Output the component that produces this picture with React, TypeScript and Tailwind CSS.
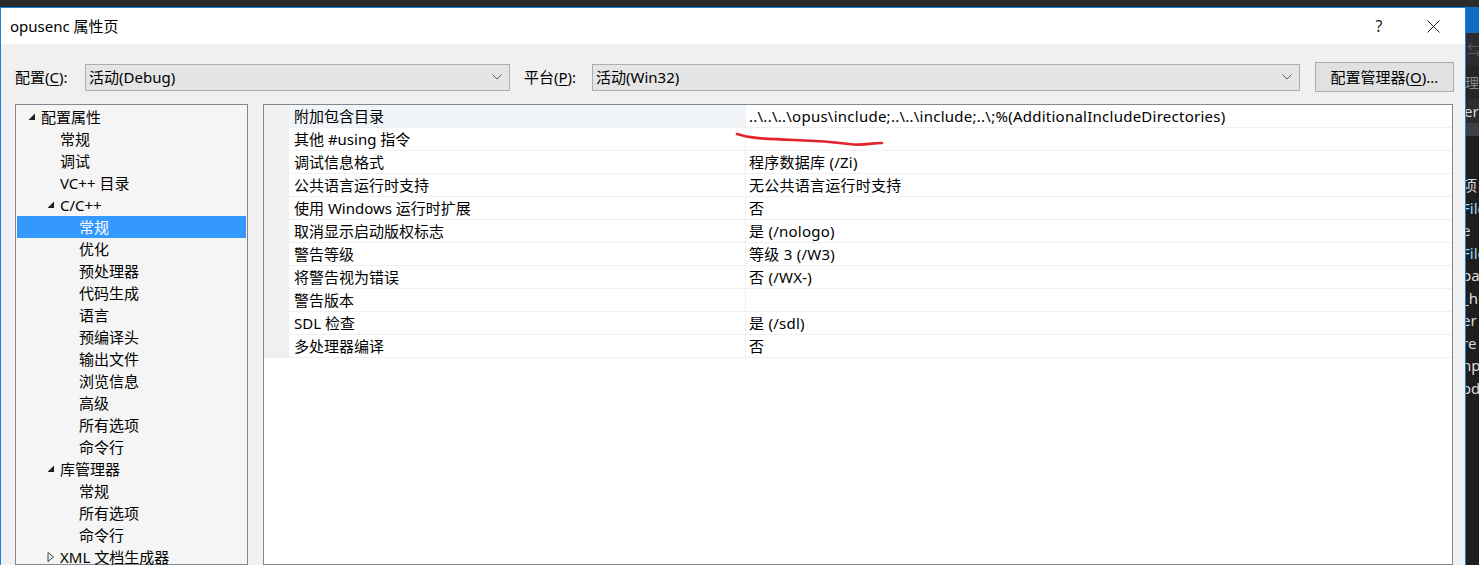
import React from "react"

const FONT = { fontFamily: '"Noto Sans", "Noto Sans CJK SC", sans-serif' }

type TreeItem = { t: string; lvl: number; exp?: "open" | "closed"; sel?: boolean }

const tree: TreeItem[] = [
  { t: "配置属性", lvl: 0, exp: "open" },
  { t: "常规", lvl: 1 },
  { t: "调试", lvl: 1 },
  { t: "VC++ 目录", lvl: 1 },
  { t: "C/C++", lvl: 1, exp: "open" },
  { t: "常规", lvl: 2, sel: true },
  { t: "优化", lvl: 2 },
  { t: "预处理器", lvl: 2 },
  { t: "代码生成", lvl: 2 },
  { t: "语言", lvl: 2 },
  { t: "预编译头", lvl: 2 },
  { t: "输出文件", lvl: 2 },
  { t: "浏览信息", lvl: 2 },
  { t: "高级", lvl: 2 },
  { t: "所有选项", lvl: 2 },
  { t: "命令行", lvl: 2 },
  { t: "库管理器", lvl: 1, exp: "open" },
  { t: "常规", lvl: 2 },
  { t: "所有选项", lvl: 2 },
  { t: "命令行", lvl: 2 },
  { t: "XML 文档生成器", lvl: 1, exp: "closed" },
]

const props: [string, string][] = [
  ["附加包含目录", "..\\..\\..\\opus\\include;..\\..\\include;..\\;%(AdditionalIncludeDirectories)"],
  ["其他 #using 指令", ""],
  ["调试信息格式", "程序数据库 (/Zi)"],
  ["公共语言运行时支持", "无公共语言运行时支持"],
  ["使用 Windows 运行时扩展", "否"],
  ["取消显示启动版权标志", "是 (/nologo)"],
  ["警告等级", "等级 3 (/W3)"],
  ["将警告视为错误", "否 (/WX-)"],
  ["警告版本", ""],
  ["SDL 检查", "是 (/sdl)"],
  ["多处理器编译", "否"],
]

function Chevron() {
  return (
    <svg width="10" height="6" viewBox="0 0 10 6" className="shrink-0">
      <polyline points="0.5,0.5 5,5 9.5,0.5" fill="none" stroke="#606060" strokeWidth="1" />
    </svg>
  )
}

function Expander({ open }: { open: boolean }) {
  return open ? (
    <svg width="8" height="8" viewBox="0 0 8 8">
      <polygon points="7,0.5 7,7 0.5,7" fill="#1e1e1e" />
    </svg>
  ) : (
    <svg width="8" height="10" viewBox="0 0 8 10">
      <polygon points="1,0.5 6.5,5 1,9.5" fill="none" stroke="#404040" strokeWidth="1" />
    </svg>
  )
}

function Combo({ width, value }: { width: string; value: string }) {
  return (
    <div
      className={`${width} h-[27px] flex items-center justify-between pl-[3px] pr-[7px] bg-[#e5e5e5] border border-[#adadad] text-[15px] leading-[25px]`}
    >
      <span>{value}</span>
      <Chevron />
    </div>
  )
}

// VS 本体のエディタが右端にわずかに覗いている部分
function BehindStrip() {
  const lines: { t: string; c: string }[] = [
    { t: "项目", c: "#dcdcdc" },
    { t: "Files", c: "#9cdcfe" },
    { t: "e", c: "#dcdcdc" },
    { t: "Files", c: "#9cdcfe" },
    { t: "pa", c: "#dcdcdc" },
    { t: "_h", c: "#dcdcdc" },
    { t: "er", c: "#dcdcdc" },
    { t: "re", c: "#dcdcdc" },
    { t: "np", c: "#dcdcdc" },
    { t: "od", c: "#dcdcdc" },
  ]
  return (
    <div className="flex-1 flex flex-col overflow-hidden bg-[#1e1e1e] text-[15px]" style={FONT}>
      <div className="h-[26px] bg-[#0e6fc1]" />
      <div className="h-[32px] bg-[#2d2d30] flex items-center text-[#5a5a5a] pl-[1px] text-[14px]">⇆</div>
      <div className="h-[34px] bg-[#252526] flex items-center text-[#8a8a8a] whitespace-nowrap -ml-[1px] text-[14px]">理器</div>
      <div className="h-[24px] bg-[#2d2d30] flex items-center text-[#dcdcdc] whitespace-nowrap -ml-[2px]">er</div>
      <div className="h-[13px] bg-[#3f3f46]" />
      <div className="pt-[38px] flex flex-col">
        {lines.map((l, i) => (
          <div key={i} className="h-[22.5px] leading-[22.5px] whitespace-nowrap -ml-[4px]" style={{ color: l.c }}>
            {l.t}
          </div>
        ))}
      </div>
    </div>
  )
}

export default function App() {
  return (
    <div className="w-[1479px] h-[565px] overflow-hidden bg-[#2b2b2b] flex flex-col text-black" style={FONT}>
      <div className="h-[7px] shrink-0 bg-[#2b2b2b]" />
      <div className="flex flex-1 min-h-0">
        {/* ダイアログ本体 */}
        <div className="w-[1466px] shrink-0 flex flex-col border-t border-l border-r border-[#1883d7] bg-[#f0f0f0]">
          {/* タイトルバー */}
          <div className="h-[36px] shrink-0 bg-white flex items-center justify-between pl-[9px]">
            <span className="text-[15px]">opusenc 属性页</span>
            <div className="flex items-center h-full">
              <span className="w-[46px] mr-[8px] text-center text-[16px] text-[#1e1e1e]">?</span>
              <div className="w-[46px] flex justify-center mr-[9px]">
                <svg width="13" height="13" viewBox="0 0 13 13">
                  <path d="M0.5 0.5 L12.5 12.5 M12.5 0.5 L0.5 12.5" stroke="#1e1e1e" strokeWidth="1" />
                </svg>
              </div>
            </div>
          </div>

          {/* 構成 / プラットフォーム行 */}
          <div className="flex items-center pl-[14px] pt-[18px] h-[48px] shrink-0 text-[15px]">
            <span className="w-[70px]">
              配置(<span className="underline underline-offset-2">C</span>):
            </span>
            <Combo width="w-[425px]" value="活动(Debug)" />
            <span className="w-[68px] ml-[14px]">
              平台(<span className="underline underline-offset-2">P</span>):
            </span>
            <Combo width="w-[708px]" value="活动(Win32)" />
            <button className="ml-[15px] w-[139px] h-[30px] bg-[#e1e1e1] border border-[#adadad] text-[15px] leading-[28px]">
              配置管理器(<span className="underline underline-offset-2">O</span>)...
            </button>
          </div>

          <div className="flex flex-1 min-h-0 pt-[12px] pl-[14px] gap-[15px]">
            {/* ツリー */}
            <div className="w-[233px] shrink-0 border border-[#828790] bg-[#f5f5f5] pt-[1px] px-[1px] text-[15px]">
              {tree.map((it, i) => (
                <div
                  key={i}
                  className={`h-[22px] flex items-center whitespace-nowrap ${it.sel ? "bg-[#3399ff] text-white" : ""}`}
                  style={{ paddingLeft: 6 + it.lvl * 19 }}
                >
                  <span className="w-[18px] flex justify-center shrink-0">
                    {it.exp ? <Expander open={it.exp === "open"} /> : null}
                  </span>
                  <span className="leading-[22px]">{it.t}</span>
                </div>
              ))}
            </div>

            {/* プロパティグリッド */}
            <div className="w-[1190px] shrink-0 border border-[#828790] bg-white relative text-[15px]">
              {props.map(([name, value], i) => (
                <div key={i} className="h-[23px] flex">
                  <div className="w-[25px] shrink-0 bg-[#f0f0f0]" />
                  <div
                    className={`w-[457px] shrink-0 pl-[5px] leading-[22px] border-b border-[#f0f0f0] border-r whitespace-nowrap ${
                      i === 0 ? "bg-[#f1f4f9]" : ""
                    }`}
                  >
                    {name}
                  </div>
                  <div className="flex-1 pl-[3px] leading-[22px] tracking-[0.25px] border-b border-[#f0f0f0] whitespace-nowrap">
                    {value}
                  </div>
                </div>
              ))}
              {/* 赤い手書きの下線 */}
              <svg className="absolute left-[470px] top-[25px]" width="160" height="20" viewBox="0 0 160 20">
                <path
                  d="M3 4 C 15 8, 30 9, 60 10 S 100 12, 115 14 S 135 13, 148 13"
                  fill="none"
                  stroke="#e3232a"
                  strokeWidth="2.6"
                  strokeLinecap="round"
                />
              </svg>
            </div>
          </div>
        </div>
        <BehindStrip />
      </div>
    </div>
  )
}
